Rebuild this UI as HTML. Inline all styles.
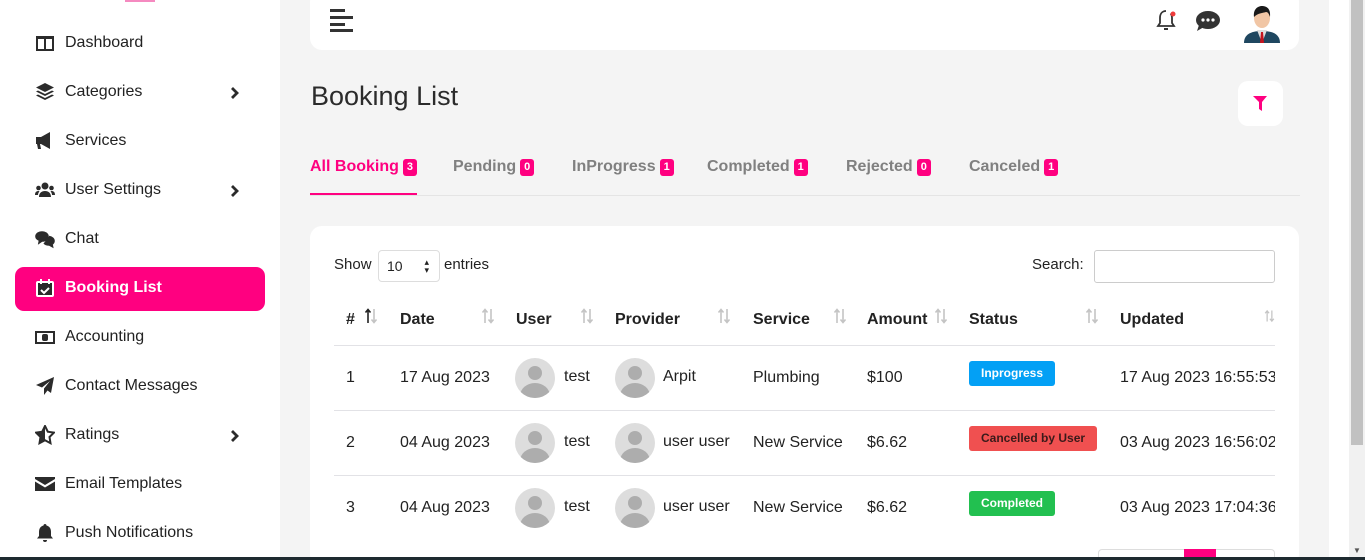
<!DOCTYPE html>
<html><head><meta charset="utf-8"><style>
*{box-sizing:border-box;margin:0;padding:0}
html,body{width:1365px;height:560px;overflow:hidden}
body{background:#f4f4f4;font-family:"Liberation Sans",sans-serif;color:#222;position:relative}
.abs{position:absolute}
#side{left:0;top:0;width:280px;height:560px;background:#fff}
.nav{position:absolute;left:35px;font-size:16px;color:#222;display:flex;align-items:center;height:24px}
.nav svg{width:20px;height:20px;margin-right:10px;fill:#2b2b2b}
.chev{position:absolute;left:229px}
.active{left:15px;top:267px;width:250px;height:44px;background:#ff0080;border-radius:9px}
.tab{position:absolute;top:158px;font-size:16px;font-weight:bold;color:#808080}
.b{display:inline-block;background:#ff0080;color:#fff;font-size:11px;border-radius:3px;padding:2px 4px;margin-left:4px;vertical-align:1px;line-height:13px}
.th{position:absolute;top:311px;font-size:16px;font-weight:bold;color:#222}
.so{position:absolute;top:307px}
.td{position:absolute;font-size:16px;color:#222}
.line{position:absolute;left:334px;width:941px;height:1px;background:#e2e2e6}
.av{position:absolute;width:40px;height:40px;border-radius:50%;background:#ddd;overflow:hidden}
.av:before{content:"";position:absolute;left:13px;top:8px;width:14px;height:14px;border-radius:50%;background:#adadad}
.av:after{content:"";position:absolute;left:5px;top:25px;width:30px;height:26px;border-radius:50%;background:#adadad}
.st{position:absolute;left:969px;height:25px;border-radius:3px;color:#fff;font-size:12px;font-weight:bold;line-height:25px;padding:0 12px}
</style></head><body>
<svg width="0" height="0" style="position:absolute"><defs>
<symbol id="so" viewBox="0 0 14 18"><path d="M4 16V3M1.5 5.5L4 2.5l2.5 3" fill="none" stroke="currentColor" stroke-width="1.6"/><path d="M10 2v13M7.5 12.5L10 15.5l2.5-3" fill="none" stroke="#c4c4c4" stroke-width="1.6"/></symbol>
<symbol id="ch" viewBox="0 0 12 14"><path d="M3 2l5 5-5 5" fill="none" stroke="#2b2b2b" stroke-width="2.8"/></symbol>
</defs></svg>
<div id="side" class="abs">
<div class="abs" style="left:125px;top:0;width:30px;height:2px;background:#f58ac0"></div>
<div class="nav" style="top:31px"><svg viewBox="0 0 20 20"><path d="M1 3h18v15H1zM3 6v10h6V6zM11 6v10h6V6z" fill-rule="evenodd"/></svg>Dashboard</div>
<div class="nav" style="top:80px"><svg viewBox="0 0 20 20"><path d="M10 1l9 4.5-9 4.5-9-4.5zM1 9.5l2-1 7 3.5 7-3.5 2 1-9 4.5zM1 13.5l2-1 7 3.5 7-3.5 2 1-9 4.5z"/></svg>Categories</div><svg class="chev" style="top:86px" width="12" height="14"><use href="#ch"/></svg>
<div class="nav" style="top:129px"><svg viewBox="0 0 20 20"><path d="M1 6h5l9-5v17l-9-5H5l1 5H3l-1-5H1z"/></svg>Services</div>
<div class="nav" style="top:178px"><svg viewBox="0 0 20 20"><circle cx="10" cy="6" r="3.5"/><circle cx="3.5" cy="8" r="2.3"/><circle cx="16.5" cy="8" r="2.3"/><path d="M4 17c0-4 2.5-6 6-6s6 2 6 6zM0 15c0-3 1.5-4 3.5-4l1 .3C3.5 12.5 3 14 3 15zM20 15c0-3-1.5-4-3.5-4l-1 .3c1 1.2 1.5 2.7 1.5 3.7z"/></svg>User Settings</div><svg class="chev" style="top:184px" width="12" height="14"><use href="#ch"/></svg>
<div class="nav" style="top:227px"><svg viewBox="0 0 20 20" fill="none" stroke="#2b2b2b" stroke-width="1.6"><path d="M7 3c3.5 0 6 2 6 4.5S10.5 12 7 12l-3 2 .5-2.7C2.5 10.5 1 9 1 7.5 1 5 3.5 3 7 3z"/><path d="M14 7.5c3 .5 5 2.3 5 4.5 0 1.3-.8 2.5-2 3.2l.5 2.5-3-1.7c-2.5 0-4.5-.8-5.5-2"/></svg>Chat</div>
<div class="abs active"></div>
<div class="nav" style="top:276px;color:#fff;font-weight:bold"><svg viewBox="0 0 20 20" fill="none" stroke="#fff" stroke-width="2"><rect x="2" y="4" width="16" height="14" rx="1"/><path d="M6 1v5M14 1v5M6 12l3 3 5-5"/></svg>Booking List</div>
<div class="nav" style="top:325px"><svg viewBox="0 0 20 20"><path d="M0 4h20v13H0zM2 6v9h16V6z" fill-rule="evenodd"/><rect x="7" y="7" width="6" height="7" rx="2"/></svg>Accounting</div>
<div class="nav" style="top:374px"><svg viewBox="0 0 20 20"><path d="M19 1L1 9l6 2.5L15 5l-6 7.5V19l3.5-4.5L16 17z"/></svg>Contact Messages</div>
<div class="nav" style="top:423px"><svg viewBox="0 0 20 20"><path d="M10 1l2.8 5.7 6.2.9-4.5 4.4 1 6.2L10 15.3 4.5 18.2l1-6.2L1 7.6l6.2-.9z" fill="none" stroke="#2b2b2b" stroke-width="2"/><path d="M10 1v14.3L4.5 18.2l1-6.2L1 7.6l6.2-.9z"/></svg>Ratings</div><svg class="chev" style="top:429px" width="12" height="14"><use href="#ch"/></svg>
<div class="nav" style="top:472px"><svg viewBox="0 0 20 20"><path d="M0 3h20v2l-10 6L0 5zM0 7.5l10 6 10-6V17H0z"/></svg>Email Templates</div>
<div class="nav" style="top:521px"><svg viewBox="0 0 20 20"><path d="M10 1c1 0 1.5.7 1.5 1.5 3 .8 4.5 3 4.5 6.5v4l2 2.5H2l2-2.5V9c0-3.5 1.5-5.7 4.5-6.5C8.5 1.7 9 1 10 1zM8 17h4a2 2 0 01-4 0z"/></svg>Push Notifications</div>
</div>

<div class="abs" style="left:310px;top:-10px;width:989px;height:60px;background:#fff;border-radius:12px"></div>
<div class="abs" style="left:330px;top:9px;width:15px;height:3px;background:#333"></div>
<div class="abs" style="left:330px;top:16px;width:23px;height:3px;background:#333"></div>
<div class="abs" style="left:330px;top:23px;width:15px;height:3px;background:#333"></div>
<div class="abs" style="left:330px;top:29px;width:23px;height:3px;background:#333"></div>
<svg class="abs" style="left:1154px;top:8px" width="24" height="26" viewBox="0 0 24 26"><path d="M12 3c-4 0-6 3-6 7v5l-2 3h16l-2-3v-5c0-2-.5-3.5-1.5-4.5" fill="none" stroke="#333" stroke-width="1.8"/><path d="M10 21h4" stroke="#333" stroke-width="2"/><circle cx="19" cy="6" r="2.5" fill="#ef3b3b"/></svg>
<svg class="abs" style="left:1196px;top:10px" width="26" height="22" viewBox="0 0 26 22"><ellipse cx="12" cy="10" rx="12" ry="9" fill="#333"/><path d="M3 15l-2 6 7-4z" fill="#333"/><circle cx="7" cy="10" r="1.6" fill="#fff"/><circle cx="12" cy="10" r="1.6" fill="#fff"/><circle cx="17" cy="10" r="1.6" fill="#fff"/></svg>
<svg class="abs" style="left:1243px;top:3px" width="38" height="40" viewBox="0 0 38 40"><path d="M1 40c0-8 6-12 18-12s18 4 18 12z" fill="#1f4760"/><path d="M14 27h10l-5 13z" fill="#ddd"/><path d="M18 29h2l1 11h-4z" fill="#c4141e"/><ellipse cx="19" cy="15" rx="8" ry="10" fill="#f1c6a5"/><path d="M11 14c-1-8 4-11 8-11s9 2 8 11c-1-3-2-5-4-5-3 1-8 1-12 5z" fill="#1a1a1a"/></svg>

<div class="abs" style="left:311px;top:81px;font-size:27px;color:#2b2b2b">Booking List</div>
<div class="abs" style="left:1238px;top:81px;width:45px;height:45px;background:#fff;border-radius:10px"></div>
<svg class="abs" style="left:1252px;top:95px" width="16" height="17" viewBox="0 0 16 17"><path d="M1 1h14l-5 6v9l-3-2V7z" fill="#ff0080"/></svg>

<div class="tab" style="left:310px;color:#ff0080">All Booking<span class="b">3</span></div>
<div class="abs" style="left:310px;top:193px;width:107px;height:3px;background:#ff0080"></div>
<div class="tab" style="left:453px">Pending<span class="b">0</span></div>
<div class="tab" style="left:572px">InProgress<span class="b">1</span></div>
<div class="tab" style="left:707px">Completed<span class="b">1</span></div>
<div class="tab" style="left:846px">Rejected<span class="b">0</span></div>
<div class="tab" style="left:969px">Canceled<span class="b">1</span></div>
<div class="abs" style="left:310px;top:195px;width:990px;height:1px;background:#e4e4e4"></div>

<div class="abs" style="left:310px;top:226px;width:989px;height:340px;background:#fff;border-radius:12px"></div>
<div class="td" style="left:334px;top:256px;font-size:15px">Show</div>
<div class="abs" style="left:378px;top:250px;width:62px;height:32px;border:1px solid #ddd;border-radius:4px;font-size:14px;padding:7px 8px">10<span style="position:absolute;right:10px;top:7px;font-size:9px;line-height:8px">▴<br>▾</span></div>
<div class="td" style="left:444px;top:256px;font-size:15px">entries</div>
<div class="td" style="left:1032px;top:256px;font-size:15px">Search:</div>
<div class="abs" style="left:1094px;top:250px;width:181px;height:33px;border:1px solid #ccc;border-radius:3px"></div>

<div class="th" style="left:346px">#</div><svg class="so" style="left:364px;color:#222" width="14" height="18"><use href="#so"/></svg>
<div class="th" style="left:400px">Date</div><svg class="so" style="left:481px;color:#c4c4c4" width="14" height="18"><use href="#so"/></svg>
<div class="th" style="left:516px">User</div><svg class="so" style="left:580px;color:#c4c4c4" width="14" height="18"><use href="#so"/></svg>
<div class="th" style="left:615px">Provider</div><svg class="so" style="left:717px;color:#c4c4c4" width="14" height="18"><use href="#so"/></svg>
<div class="th" style="left:753px">Service</div><svg class="so" style="left:833px;color:#c4c4c4" width="14" height="18"><use href="#so"/></svg>
<div class="th" style="left:867px">Amount</div><svg class="so" style="left:934px;color:#c4c4c4" width="14" height="18"><use href="#so"/></svg>
<div class="th" style="left:969px">Status</div><svg class="so" style="left:1085px;color:#c4c4c4" width="14" height="18"><use href="#so"/></svg>
<div class="th" style="left:1120px">Updated</div><svg class="so" style="left:1264px;color:#c4c4c4" width="11" height="18" viewBox="0 0 11 18"><use href="#so"/></svg>
<div class="line" style="top:345px"></div>
<div class="line" style="top:410px"></div>
<div class="line" style="top:475px"></div>

<div class="td" style="left:346px;top:369px">1</div><div class="td" style="left:400px;top:369px">17 Aug 2023</div>
<div class="av" style="left:515px;top:358px"></div><div class="td" style="left:564px;top:368px">test</div>
<div class="av" style="left:615px;top:358px"></div><div class="td" style="left:663px;top:368px">Arpit</div>
<div class="td" style="left:753px;top:369px">Plumbing</div><div class="td" style="left:867px;top:369px">$100</div>
<div class="st" style="top:361px;background:#03a0f5">Inprogress</div>
<div class="td" style="left:1120px;top:369px;width:155px;overflow:hidden;white-space:nowrap">17 Aug 2023 16:55:53</div>

<div class="td" style="left:346px;top:434px">2</div><div class="td" style="left:400px;top:434px">04 Aug 2023</div>
<div class="av" style="left:515px;top:423px"></div><div class="td" style="left:564px;top:433px">test</div>
<div class="av" style="left:615px;top:423px"></div><div class="td" style="left:663px;top:433px">user user</div>
<div class="td" style="left:753px;top:434px">New Service</div><div class="td" style="left:867px;top:434px">$6.62</div>
<div class="st" style="top:426px;background:#f05050;color:#3a1a1a">Cancelled by User</div>
<div class="td" style="left:1120px;top:434px;width:155px;overflow:hidden;white-space:nowrap">03 Aug 2023 16:56:02</div>

<div class="td" style="left:346px;top:499px">3</div><div class="td" style="left:400px;top:499px">04 Aug 2023</div>
<div class="av" style="left:515px;top:488px"></div><div class="td" style="left:564px;top:498px">test</div>
<div class="av" style="left:615px;top:488px"></div><div class="td" style="left:663px;top:498px">user user</div>
<div class="td" style="left:753px;top:499px">New Service</div><div class="td" style="left:867px;top:499px">$6.62</div>
<div class="st" style="top:491px;background:#22c050">Completed</div>
<div class="td" style="left:1120px;top:499px;width:155px;overflow:hidden;white-space:nowrap">03 Aug 2023 17:04:36</div>

<div class="abs" style="left:1098px;top:549px;width:177px;height:20px;border:1px solid #ddd;border-radius:4px"></div>
<div class="abs" style="left:1184px;top:549px;width:32px;height:12px;background:#ff0080"></div>

<div class="abs" style="left:1329px;top:0;width:20px;height:560px;background:#fff"></div>
<div class="abs" style="left:1349px;top:0;width:16px;height:560px;background:#f1f1f1"></div>
<div class="abs" style="left:1351px;top:0;width:12px;height:445px;background:#c1c1c1"></div>
<div class="abs" style="left:1353px;top:546px;font-size:8px;color:#555">▼</div>
<div class="abs" style="left:0;top:557px;width:1365px;height:3px;background:#1e2a30"></div>
</body></html>
